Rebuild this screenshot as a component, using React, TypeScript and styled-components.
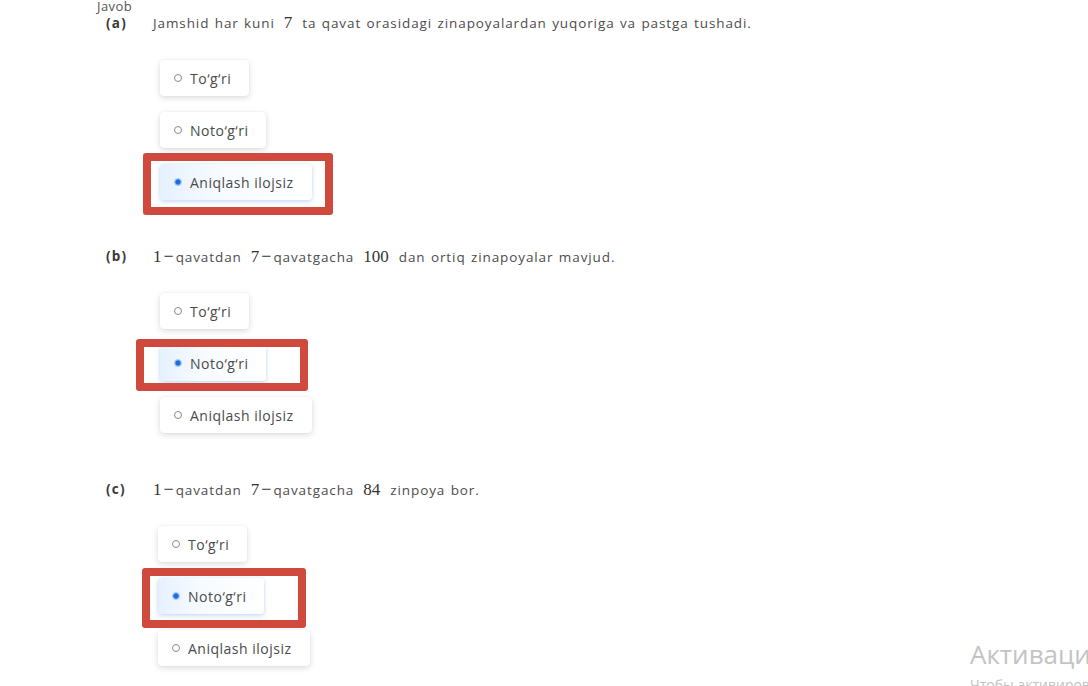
import React from "react";
import styled, { createGlobalStyle } from "styled-components";

const GlobalStyle = createGlobalStyle`
  html, body { margin: 0; padding: 0; background: #ffffff; }
  body {
    font-family: "Open Sans", "Noto Sans", sans-serif;
    color: #4a4a4a;
    overflow: hidden;
  }
`;

const Page = styled.main`
  position: relative;
  width: 1088px;
  height: 686px;
  padding-left: 97px;
  box-sizing: border-box;
  overflow: hidden;
`;

const AnswerTitle = styled.div`
  font-size: 13px;
  line-height: 15px;
  margin-top: -1px;
  letter-spacing: 0.4px;
  color: #555;
`;

const Section = styled.section<{ $first?: boolean }>`
  margin-top: ${(p) => (p.$first ? "0px" : "47px")};
`;

const QuestionRow = styled.div`
  display: flex;
  align-items: center;
  height: 18px;
  font-size: 13.5px;
  letter-spacing: 0.9px;
  word-spacing: 1px;
  color: #4d4d4d;
`;

const Letter = styled.span`
  width: 47px;
  margin-left: 9px;
  font-weight: 700;
  letter-spacing: 1.2px;
  color: #3a3a3a;
  flex: none;
`;

const QuestionText = styled.span`
  white-space: pre;
`;

const Math = styled.span<{ $lead?: boolean; $tight?: boolean }>`
  font-family: "Liberation Serif", "DejaVu Serif", serif;
  font-size: 17px;
  letter-spacing: 0;
  color: #333;
  margin: 0 ${(p) => (p.$tight ? "0" : "10px")} 0 ${(p) => (p.$lead ? "0" : "9px")};
`;

const MathOp = styled.span`
  font-size: 18px;
  margin: 0 2px 0 2px;
`;

const Options = styled.div<{ $shift?: number }>`
  display: flex;
  flex-direction: column;
  align-items: flex-start;
  gap: 16px;
  margin-top: 28px;
  margin-left: ${(p) => 63 + (p.$shift ?? 0)}px;
`;

const OptionWrap = styled.div`
  position: relative;
`;

const OptionButton = styled.div<{ $selected?: boolean }>`
  position: relative;
  z-index: 1;
  display: inline-flex;
  align-items: center;
  gap: 8px;
  height: 36px;
  padding: 0 18px 0 14px;
  box-sizing: border-box;
  border-radius: 4px;
  font-size: 14px;
  letter-spacing: 0.5px;
  color: #4a4a4a;
  background: ${(p) =>
    p.$selected ? "linear-gradient(90deg, #e6f1ff 0%, #f7fbff 40%, #ffffff 100%)" : "#ffffff"};
  box-shadow: ${(p) =>
    p.$selected
      ? "0 2px 5px rgba(70, 140, 230, 0.28), 0 0 2px rgba(70, 140, 230, 0.15)"
      : "0 2px 6px rgba(0, 0, 0, 0.14), 0 0 2px rgba(0, 0, 0, 0.06)"};
`;

const Radio = styled.span<{ $checked?: boolean }>`
  width: 8px;
  height: 8px;
  border-radius: 50%;
  box-sizing: border-box;
  flex: none;
  border: 1px solid ${(p) => (p.$checked ? "#9cc3f5" : "#8a8a8a")};
  background: ${(p) => (p.$checked ? "radial-gradient(circle, #1a6fe0 55%, #8fbaf2 70%)" : "#fff")};
`;

const Highlight = styled.div<{ $l: number; $r: number; $t: number; $b: number }>`
  position: absolute;
  left: ${(p) => -p.$l}px;
  right: ${(p) => -p.$r}px;
  top: ${(p) => -p.$t}px;
  bottom: ${(p) => -p.$b}px;
  border: 8px solid #cf4a3c;
  border-radius: 3px;
  box-sizing: border-box;
  z-index: 2;
  pointer-events: none;
`;

const Watermark = styled.div`
  position: absolute;
  left: 970px;
  top: 632px;
  font-family: "Open Sans", "Noto Sans", sans-serif;
  color: #c3c3c3;
  white-space: nowrap;
`;

const WatermarkTitle = styled.div`
  font-size: 26px;
  line-height: 44px;
`;

const WatermarkSub = styled.div`
  font-size: 14px;
  line-height: 18px;
`;

type Hl = { l: number; r: number; t: number; b: number };

const OPTIONS = ["To‘g‘ri", "Noto‘g‘ri", "Aniqlash ilojsiz"];

function Option({ label, selected, hl }: { label: string; selected?: boolean; hl?: Hl }) {
  return (
    <OptionWrap>
      <OptionButton $selected={selected}>
        <Radio $checked={selected} />
        {label}
      </OptionButton>
      {hl && <Highlight $l={hl.l} $r={hl.r} $t={hl.t} $b={hl.b} />}
    </OptionWrap>
  );
}

function OptionGroup({ selected, hl, shift }: { selected: number; hl: Hl; shift?: number }) {
  return (
    <Options $shift={shift}>
      {OPTIONS.map((o, i) => (
        <Option key={o} label={o} selected={i === selected} hl={i === selected ? hl : undefined} />
      ))}
    </Options>
  );
}

function Floors({ tail }: { tail: string }) {
  return (
    <>
      <Math $lead $tight>
        1<MathOp>−</MathOp>
      </Math>
      qavatdan
      <Math $tight>
        7<MathOp>−</MathOp>
      </Math>
      qavatgacha
      <Math>{tail}</Math>
    </>
  );
}

export default function App() {
  return (
    <>
      <GlobalStyle />
      <Page>
        <AnswerTitle>Javob</AnswerTitle>
        <Section $first>
          <QuestionRow>
            <Letter>(a)</Letter>
            <QuestionText>
              Jamshid har kuni<Math>7</Math>ta qavat orasidagi zinapoyalardan yuqoriga va pastga tushadi.
            </QuestionText>
          </QuestionRow>
          <OptionGroup selected={2} hl={{ l: 17, r: 21, t: 11, b: 15 }} />
        </Section>
        <Section>
          <QuestionRow>
            <Letter>(b)</Letter>
            <QuestionText>
              <Floors tail="100" />dan ortiq zinapoyalar mavjud.
            </QuestionText>
          </QuestionRow>
          <OptionGroup selected={1} hl={{ l: 24, r: 42, t: 6, b: 10 }} />
        </Section>
        <Section>
          <QuestionRow>
            <Letter>(c)</Letter>
            <QuestionText>
              <Floors tail="84" />zinpoya bor.
            </QuestionText>
          </QuestionRow>
          <OptionGroup selected={1} shift={-2} hl={{ l: 16, r: 42, t: 10, b: 14 }} />
        </Section>
        <Watermark>
          <WatermarkTitle>Активация Windows</WatermarkTitle>
          <WatermarkSub>Чтобы активировать Windows, перейдите в раздел "Параметры".</WatermarkSub>
        </Watermark>
      </Page>
    </>
  );
}
